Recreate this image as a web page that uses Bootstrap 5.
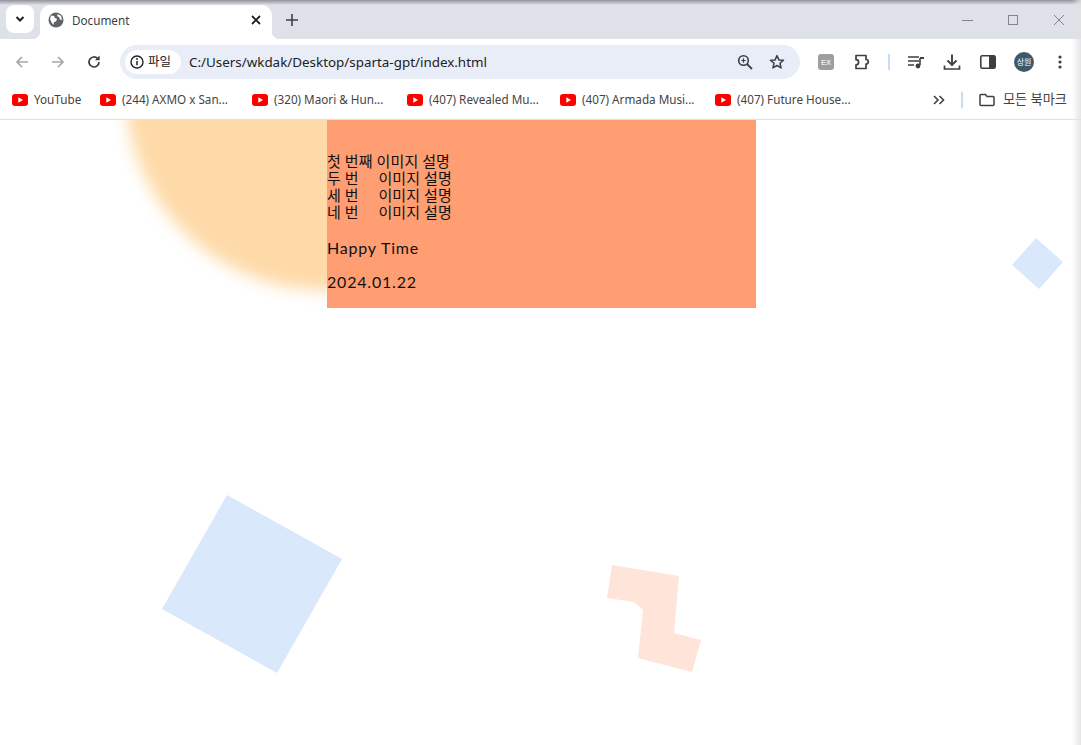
<!DOCTYPE html>
<html lang="ko">
<head>
    <meta charset="UTF-8">
    <meta name="viewport" content="width=device-width, initial-scale=1.0">
    <title>Document</title>
    <link rel="stylesheet" href="https://cdn.jsdelivr.net/npm/bootstrap@5.3.0/dist/css/bootstrap.min.css">
    <style>
        html, body { height: 745px; overflow: hidden; background: #fff; }
        body { font-family: "Noto Sans", "Noto Sans CJK KR", sans-serif; color: #3c4043; position: relative; }
        svg { display: block; }

        /* browser chrome */
        .tab-strip { height: 39px; background: #dee1e8; padding: 5px 0 0 6px; }
        .tab-list-btn { width: 28px; height: 28px; background: #fff; border-radius: 8px; margin-right: 6px; }
        .tab-item { width: 232px; height: 34px; background: #fff; border-radius: 10px 10px 0 0; padding: 0 8px 5px 8px; position: relative; }
        .tab-item::before, .tab-item::after { content: ""; position: absolute; bottom: 0; width: 8px; height: 8px; }
        .tab-item::before { left: -8px; background: radial-gradient(circle at 0 0, transparent 8px, #fff 8.5px); }
        .tab-item::after { right: -8px; background: radial-gradient(circle at 100% 0, transparent 8px, #fff 8.5px); }
        .tab-title { font-size: 11.7px; color: #3c4043; margin: 2px 0 0 8px; }
        .tab-plus { margin: 0 0 5px 14px; }
        .win-btn { width: 46px; height: 30px; }
        .win-btns { margin-right: -1px; }

        .tool-bar { height: 44px; background: #fff; border-radius: 10px 10px 0 0; padding: 2px 0 0 4px; }
        .nav-btn { width: 36px; height: 36px; flex-shrink: 0; }
        .addr-bar { width: 680px; height: 34px; background: #e9edf7; border-radius: 17px; margin: 0 8px; padding: 0 7px 0 5px; flex-shrink: 0; }
        .addr-chip { width: 56px; height: 24px; background: #fff; border-radius: 12px; padding-left: 5px; font-size: 12.5px; color: #202124; gap: 4px; }
        .addr-url { font-size: 13.4px; color: #202124; margin-left: 8px; }
        .addr-icon { width: 32px; height: 32px; }
        .tool-sep { width: 2px; height: 16px; background: #c9dcf5; margin: 0 8px; flex-shrink: 0; }
        .avatar-dot { width: 20px; height: 20px; border-radius: 50%; background: #3d5a6c; color: #fff; font-size: 8px; }

        .mark-bar { height: 37px; background: #fff; border-bottom: 1px solid #dfe1e5; padding: 0 14px 2px 12px; font-size: 11.7px; }
        .mark-item { color: #444; white-space: nowrap; gap: 6px; }
        .mark-all { font-size: 13.2px; gap: 8px; }
        .mark-sep { width: 2px; height: 16px; background: #c9dcf5; margin: 0 16px; }

        .shade-right { position: absolute; top: 0; right: 0; bottom: 0; width: 9px; background: linear-gradient(to right, rgba(225,225,225,0), rgba(225,225,225,.85)); z-index: 5; }
        .shade-top { position: absolute; top: 0; left: 0; right: 0; height: 5px; background: linear-gradient(to bottom, rgba(120,122,126,.75), rgba(120,122,126,0)); z-index: 5; }

        /* page */
        .page-area { height: 625px; position: relative; overflow: hidden; background: #fff; }
        .deco-layer { position: absolute; left: 0; top: 0; }
        .deco-circle { filter: blur(8px); }
        .info-box { position: relative; width: 429px; height: 188px; margin-left: 327px; background: #ff9e73; color: #111; padding-top: 33px; font-family: "Lato", "Noto Sans CJK KR", sans-serif; font-size: 15px; }
        .info-line { line-height: 17px; white-space: pre; letter-spacing: .1px; }
        .info-big { font-size: 16px; letter-spacing: .8px; line-height: 18px; margin-top: 16px; }
        .info-line + .info-big { margin-top: 18px; }
    </style>
</head>
<body>

    <div class="shade-top"></div>
    <div class="shade-right"></div>

    <!-- Tab strip -->
    <div class="tab-strip d-flex align-items-start">
        <div class="tab-list-btn d-flex align-items-center justify-content-center">
            <svg width="12" height="12" viewBox="0 0 12 12"><path d="M2.5 4l3.5 3.5L9.5 4" fill="none" stroke="#202124" stroke-width="2"/></svg>
        </div>
        <div class="tab-item d-flex align-items-center">
            <svg width="16" height="16" viewBox="0 0 16 16"><circle cx="8" cy="8" r="7.5" fill="#5f6368"/><path d="M3 3.5l3 .5 1 2 2 1-1 2.5-2 .5-.5 3-2-2.5L2 7zM10 2l3 2 1 4-2-.5-1-2.5-2-1z" fill="#fff"/></svg>
            <span class="tab-title flex-grow-1">Document</span>
            <svg width="16" height="16" viewBox="0 0 16 16"><path d="M4 4l8 8M12 4l-8 8" stroke="#202124" stroke-width="1.8"/></svg>
        </div>
        <div class="tab-plus align-self-center">
            <svg width="12" height="12" viewBox="0 0 12 12"><path d="M6 0v12M0 6h12" stroke="#3c4043" stroke-width="1.6"/></svg>
        </div>
        <div class="win-btns d-flex ms-auto">
            <div class="win-btn d-flex align-items-center justify-content-center">
                <svg width="11" height="11" viewBox="0 0 11 11"><path d="M0 5.5h11" stroke="#80858b"/></svg>
            </div>
            <div class="win-btn d-flex align-items-center justify-content-center">
                <svg width="11" height="11" viewBox="0 0 11 11"><rect x=".5" y=".5" width="9" height="9" fill="none" stroke="#80858b"/></svg>
            </div>
            <div class="win-btn d-flex align-items-center justify-content-center">
                <svg width="12" height="12" viewBox="0 0 12 12"><path d="M1 1l10 10M11 1L1 11" stroke="#80858b"/></svg>
            </div>
        </div>
    </div>

    <!-- Toolbar -->
    <div class="tool-bar d-flex align-items-center">
        <div class="nav-btn d-flex align-items-center justify-content-center">
            <svg width="16" height="16" viewBox="0 0 16 16"><path d="M14 8H3M8 3L3 8l5 5" fill="none" stroke="#a4a6a9" stroke-width="1.7"/></svg>
        </div>
        <div class="nav-btn d-flex align-items-center justify-content-center">
            <svg width="16" height="16" viewBox="0 0 16 16"><path d="M2 8h11M8 3l5 5-5 5" fill="none" stroke="#a4a6a9" stroke-width="1.7"/></svg>
        </div>
        <div class="nav-btn d-flex align-items-center justify-content-center">
            <svg width="16" height="16" viewBox="0 0 16 16"><path d="M13 8a5 5 0 1 1-1.5-3.6" fill="none" stroke="#3c4043" stroke-width="1.7"/><path d="M13.6 1.6v4.6H9z" fill="#3c4043"/></svg>
        </div>
        <div class="addr-bar d-flex align-items-center">
            <div class="addr-chip d-flex align-items-center">
                <svg width="14" height="14" viewBox="0 0 14 14"><circle cx="7" cy="7" r="6" fill="none" stroke="#202124" stroke-width="1.4"/><path d="M7 6v4.2" stroke="#202124" stroke-width="1.5"/><circle cx="7" cy="4" r=".9" fill="#202124"/></svg>
                <span>파일</span>
            </div>
            <span class="addr-url flex-grow-1">C:/Users/wkdak/Desktop/sparta-gpt/index.html</span>
            <div class="addr-icon d-flex align-items-center justify-content-center">
                <svg width="16" height="16" viewBox="0 0 16 16"><circle cx="6.5" cy="6.5" r="4.8" fill="none" stroke="#3c4043" stroke-width="1.6"/><path d="M10 10l5 5" stroke="#3c4043" stroke-width="1.8"/><path d="M6.5 4.3v4.4M4.3 6.5h4.4" stroke="#3c4043" stroke-width="1.2"/></svg>
            </div>
            <div class="addr-icon d-flex align-items-center justify-content-center">
                <svg width="16" height="16" viewBox="0 0 16 16"><path d="M8 1.6l1.9 4.3 4.6.4-3.5 3 1.1 4.6L8 11.5l-4.1 2.4L5 9.3l-3.5-3 4.6-.4z" fill="none" stroke="#3c4043" stroke-width="1.5" stroke-linejoin="round"/></svg>
            </div>
        </div>
        <div class="nav-btn d-flex align-items-center justify-content-center">
            <svg width="16" height="16" viewBox="0 0 16 16"><rect width="16" height="16" rx="3" fill="#9e9e9e"/><text x="8" y="11" font-size="7.5" font-weight="700" text-anchor="middle" fill="#e8e8e8" font-family="Liberation Sans">EX</text></svg>
        </div>
        <div class="nav-btn d-flex align-items-center justify-content-center">
            <svg width="18" height="18" viewBox="0 0 18 18"><path d="M3 2.5h10v4a2.3 2.3 0 0 1 0 4.6v4.4H3v-3.600a2.600 2.600 0 0 0 0-5.200z" fill="none" stroke="#3c4043" stroke-width="1.7" stroke-linejoin="round"/></svg>
        </div>
        <div class="tool-sep"></div>
        <div class="nav-btn d-flex align-items-center justify-content-center">
            <svg width="18" height="16" viewBox="0 0 18 16"><path d="M1 3h11M1 7h11M1 11h6" stroke="#3c4043" stroke-width="1.6"/><path d="M13 4v7" stroke="#3c4043" stroke-width="1.6"/><path d="M13 3h4v2h-4z" fill="#3c4043"/><circle cx="11" cy="12" r="2.4" fill="#3c4043"/></svg>
        </div>
        <div class="nav-btn d-flex align-items-center justify-content-center">
            <svg width="18" height="18" viewBox="0 0 18 18"><path d="M9 1.500v10M4.500 7.500L9 12l4.500-4.500" fill="none" stroke="#3c4043" stroke-width="1.9"/><path d="M1.500 12.500v3.500h15v-3.500" fill="none" stroke="#3c4043" stroke-width="1.7"/></svg>
        </div>
        <div class="nav-btn d-flex align-items-center justify-content-center">
            <svg width="16" height="14" viewBox="0 0 16 14"><rect x=".8" y=".8" width="14.4" height="12.4" rx="1.5" fill="none" stroke="#3c4043" stroke-width="1.6"/><rect x="9" y="1" width="6" height="12" fill="#3c4043"/></svg>
        </div>
        <div class="nav-btn d-flex align-items-center justify-content-center">
            <div class="avatar-dot d-flex align-items-center justify-content-center">상원</div>
        </div>
        <div class="nav-btn d-flex align-items-center justify-content-center">
            <svg width="4" height="14" viewBox="0 0 4 14"><circle cx="2" cy="2" r="1.6" fill="#3c4043"/><circle cx="2" cy="7" r="1.6" fill="#3c4043"/><circle cx="2" cy="12" r="1.6" fill="#3c4043"/></svg>
        </div>
    </div>

    <!-- Bookmarks -->
    <div class="mark-bar d-flex align-items-center">
        <div class="d-flex" id="markList"></div>
        <svg class="ms-auto" width="12" height="10" viewBox="0 0 12 10"><path d="M1 1l4 4-4 4M6.500 1l4 4-4 4" fill="none" stroke="#3c4043" stroke-width="1.6"/></svg>
        <div class="mark-sep"></div>
        <div class="mark-item mark-all d-flex align-items-center">
            <svg width="16" height="14" viewBox="0 0 16 14"><path d="M1 2.500a1 1 0 0 1 1-1h4.500l1.500 2h6a1 1 0 0 1 1 1v7a1 1 0 0 1-1 1H2a1 1 0 0 1-1-1z" fill="none" stroke="#3c4043" stroke-width="1.5"/></svg>
            <span>모든 북마크</span>
        </div>
    </div>

    <!-- Page -->
    <div class="page-area">
        <svg class="deco-layer" width="1081" height="625" viewBox="0 120 1081 625">
            <circle class="deco-circle" cx="324" cy="92" r="198" fill="#fedaa8"/>
            <polygon points="227,495 342,559 277,673 162,609" fill="#d9e8fb"/>
            <polygon points="612,565 679,576 674,633 701,640 692,672 638,658 643,610 634,602 607,598" fill="#ffe4da"/>
            <polygon points="1036,238 1063,262 1039,289 1012,265" fill="#d9e8fb"/>
        </svg>
        <div class="info-box">
            <div class="info-line">첫 번째 이미지 설명</div>
            <div class="info-line">두 번     이미지 설명</div>
            <div class="info-line">세 번     이미지 설명</div>
            <div class="info-line">네 번     이미지 설명</div>
            <div class="info-big">Happy Time</div>
            <div class="info-big">2024.01.22</div>
        </div>
    </div>

    <script src="https://cdn.jsdelivr.net/npm/bootstrap@5.3.0/dist/js/bootstrap.bundle.min.js"></script>
    <script>
        // Bookmark items, width = slot taken on the bar
        const marks = [
            { name: "YouTube", width: 88 },
            { name: "(244) AXMO x San...", width: 152 },
            { name: "(320) Maori & Hun...", width: 155 },
            { name: "(407) Revealed Mu...", width: 153 },
            { name: "(407) Armada Musi...", width: 155 },
            { name: "(407) Future House...", width: 140 }
        ];
        const ytIcon = '<svg width="16" height="12" viewBox="0 0 16 12"><rect width="16" height="12" rx="3" fill="#f00"/><path d="M6.300 3.300L11 6 6.300 8.700z" fill="#fff"/></svg>';
        document.getElementById("markList").innerHTML = marks.map(m =>
            `<div class="mark-item d-flex align-items-center" style="width:${m.width}px">${ytIcon}<span>${m.name.replace("&", "&amp;")}</span></div>`
        ).join("");
    </script>

</body>
</html>
